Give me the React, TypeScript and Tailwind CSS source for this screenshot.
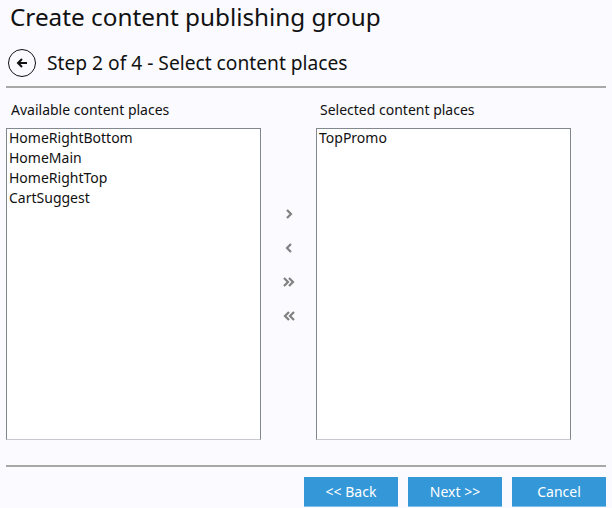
import React from "react";

const font = { fontFamily: '"Noto Sans", "Open Sans", sans-serif' };

function ListBox({ items }: { items: string[] }) {
  return (
    <div className="w-[255px] h-[312px] bg-white border border-t-[#828790] border-l-[#828790] border-r-[#828790] border-b-[#c8c8d0] pl-[1px]">
      <div className="-mt-[1px]">
        {items.map((it) => (
          <div key={it} className="text-[14px] leading-[20px] text-[#111] pl-[1px]">
            {it}
          </div>
        ))}
      </div>
    </div>
  );
}

function Chevron({ dir, double }: { dir: "r" | "l"; double?: boolean }) {
  const single = dir === "r" ? "M3 2 L7 6 L3 10" : "M7 2 L3 6 L7 10";
  return (
    <svg width={double ? 14 : 10} height="12" viewBox={double ? "0 0 14 12" : "0 0 10 12"}>
      {double ? (
        dir === "r" ? (
          <>
            <path d="M2 2 L6 6 L2 10" fill="none" stroke="#808080" strokeWidth="2.2" />
            <path d="M7 2 L11 6 L7 10" fill="none" stroke="#808080" strokeWidth="2.2" />
          </>
        ) : (
          <>
            <path d="M7 2 L3 6 L7 10" fill="none" stroke="#808080" strokeWidth="2.2" />
            <path d="M12 2 L8 6 L12 10" fill="none" stroke="#808080" strokeWidth="2.2" />
          </>
        )
      ) : (
        <path d={single} fill="none" stroke="#808080" strokeWidth="2.2" />
      )}
    </svg>
  );
}

export default function App() {
  return (
    <div className="w-[612px] h-[508px] bg-[#fafaff] overflow-hidden" style={font}>
      <div className="pl-[10px] pt-[1px] text-[24.3px] leading-[32px] text-[#111]">
        Create content publishing group
      </div>
      <div className="flex items-center pl-[8px] mt-[15px] h-[30px]">
        <div className="w-[28px] h-[28px] shrink-0 rounded-full border-[1.5px] border-[#111] flex items-center justify-center">
          <svg width="14" height="12" viewBox="0 0 14 12">
            <path d="M12 6 H3 M7 2 L3 6 L7 10" fill="none" stroke="#111" strokeWidth="2" />
          </svg>
        </div>
        <div className="ml-[11px] text-[19.2px] text-[#111] leading-[28px]">
          Step 2 of 4 - Select content places
        </div>
      </div>
      <div className="mx-[6px] mt-[8px] h-[2px] bg-[#a8a8a8]" />
      <div className="flex px-[6px] mt-[12px]">
        <div className="flex flex-col">
          <div className="pl-[5px] text-[14px] leading-[20px] text-[#111] h-[20px]">Available content places</div>
          <div className="mt-[8px]">
            <ListBox items={["HomeRightBottom", "HomeMain", "HomeRightTop", "CartSuggest"]} />
          </div>
        </div>
        <div className="w-[55px] flex flex-col items-center pt-[108px] gap-[22px]">
          <Chevron dir="r" />
          <Chevron dir="l" />
          <Chevron dir="r" double />
          <Chevron dir="l" double />
        </div>
        <div className="flex flex-col">
          <div className="pl-[4px] text-[14px] leading-[20px] text-[#111] h-[20px]">Selected content places</div>
          <div className="mt-[8px]">
            <ListBox items={["TopPromo"]} />
          </div>
        </div>
      </div>
      <div className="mx-[6px] mt-[25px] h-[2px] bg-[#a8a8a8]" />
      <div className="flex justify-end gap-[10px] pr-[6px] mt-[10px]">
        {["<< Back", "Next >>", "Cancel"].map((t) => (
          <button
            key={t}
            className="w-[94px] h-[30px] bg-[#3498d8] border-b border-b-[#7ec0ec] text-white text-[14px] leading-[28px] flex items-center justify-center"
          >
            {t}
          </button>
        ))}
      </div>
    </div>
  );
}
